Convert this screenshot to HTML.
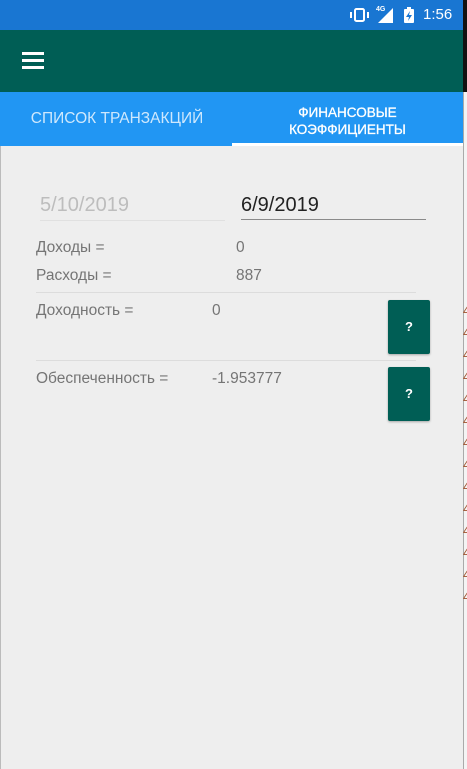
<!DOCTYPE html>
<html><head><meta charset="utf-8"><style>
*{margin:0;padding:0;box-sizing:border-box}
body{width:467px;height:769px;overflow:hidden;background:#fff;font-family:"Liberation Sans","Noto Sans CJK SC",sans-serif;position:relative}
.a{position:absolute}
#sb{left:0;top:0;width:463px;height:30px;background:#1976D2}
#tb{left:0;top:30px;width:463px;height:62px;background:#005E55}
#tabs{left:0;top:92px;width:463px;height:54px;background:#2196F3}
#ct{left:0;top:146px;width:463px;height:623px;background:#EEEEEE;border-left:1px solid #bbb}
.t{color:#757575;font-size:15.5px}
.btn{width:42px;height:54px;background:#005E55;border-radius:2px;color:#fff;font-weight:bold;font-size:13px;text-align:center;line-height:54px;box-shadow:0 1px 2px rgba(0,0,0,.3)}
.ln{height:1px;background:#DCDCDC}
</style></head><body>
<div class="a" style="left:463px;top:0;width:4px;height:30px;background:#111"></div>
<div class="a" style="left:463px;top:30px;width:4px;height:62px;background:#111"></div>
<div class="a" id="sb">
 <svg class="a" style="left:349px;top:8px" width="22" height="14"><rect x="6" y="1" width="9" height="12" rx="1.5" fill="none" stroke="#fff" stroke-width="2"/><rect x="1" y="4" width="2" height="6" fill="#fff"/><rect x="18" y="4" width="2" height="6" fill="#fff"/></svg>
 <div class="a" style="left:376px;top:6px;color:#fff;font-size:7px;font-weight:bold">4G</div>
 <svg class="a" style="left:377px;top:8px" width="17" height="15"><polygon points="16,0 16,15 1,15" fill="#fff"/></svg>
 <svg class="a" style="left:404px;top:7px" width="10" height="16"><rect x="0" y="2" width="10" height="14" rx="1" fill="#fff"/><rect x="3" y="0" width="4" height="2" fill="#fff"/><polygon points="6,4 2,10 5,10 4,14 8,8 5,8" fill="#1976D2"/></svg>
 <div class="a" style="left:423px;top:6px;color:#fff;font-size:15px">1:56</div>
</div>
<div class="a" id="tb">
 <div class="a" style="left:22px;top:22px;width:22px;height:3px;background:#fff"></div>
 <div class="a" style="left:22px;top:29px;width:22px;height:3px;background:#fff"></div>
 <div class="a" style="left:22px;top:36px;width:22px;height:3px;background:#fff"></div>
</div>
<div class="a" id="tabs">
 <div class="a" style="left:0;top:18px;width:234px;text-align:center;color:rgba(255,255,255,.78);font-size:15.5px">СПИСОК ТРАНЗАКЦИЙ</div>
 <div class="a" style="left:232px;top:12px;width:231px;text-align:center;color:#fff;font-size:13.5px;line-height:17px;-webkit-text-stroke:0.3px #fff">ФИНАНСОВЫЕ<br>КОЭФФИЦИЕНТЫ</div>
 <div class="a" style="left:232px;top:51px;width:231px;height:3px;background:#fff"></div>
</div>
<div class="a" id="ct">
 <div class="a" style="left:39px;top:48px;color:#BDBDBD;font-size:20px">5/10/2019</div>
 <div class="a" style="left:39px;top:74px;width:185px;height:1px;background:#E0E0E0"></div>
 <div class="a" style="left:240px;top:48px;color:#222;font-size:20px">6/9/2019</div>
 <div class="a" style="left:240px;top:73px;width:185px;height:1px;background:#8a8a8a"></div>
 <div class="a t" style="left:35px;top:93px">Доходы =</div>
 <div class="a t" style="left:235px;top:93px">0</div>
 <div class="a t" style="left:35px;top:121px">Расходы =</div>
 <div class="a t" style="left:235px;top:121px">887</div>
 <div class="a ln" style="left:35px;top:146px;width:380px"></div>
 <div class="a t" style="left:35px;top:156px">Доходность =</div>
 <div class="a t" style="left:211px;top:156px">0</div>
 <div class="a btn" style="left:387px;top:154px">?</div>
 <div class="a ln" style="left:35px;top:214px;width:380px"></div>
 <div class="a t" style="left:35px;top:224px">Обеспеченность =</div>
 <div class="a t" style="left:211px;top:224px">-1.953777</div>
 <div class="a btn" style="left:387px;top:221px">?</div>
</div>
<div class="a" style="left:463px;top:92px;width:4px;height:677px;background:#f4f4f4;border-left:1px solid #aaa"></div>
<div class="a" style="left:463px;top:300px;width:4px;font-size:12px;color:#a0522d;line-height:22px">4<br>4<br>4<br>4<br>4<br>4<br>4<br>4<br>4<br>4<br>4<br>4<br>4<br>4</div>
</body></html>
